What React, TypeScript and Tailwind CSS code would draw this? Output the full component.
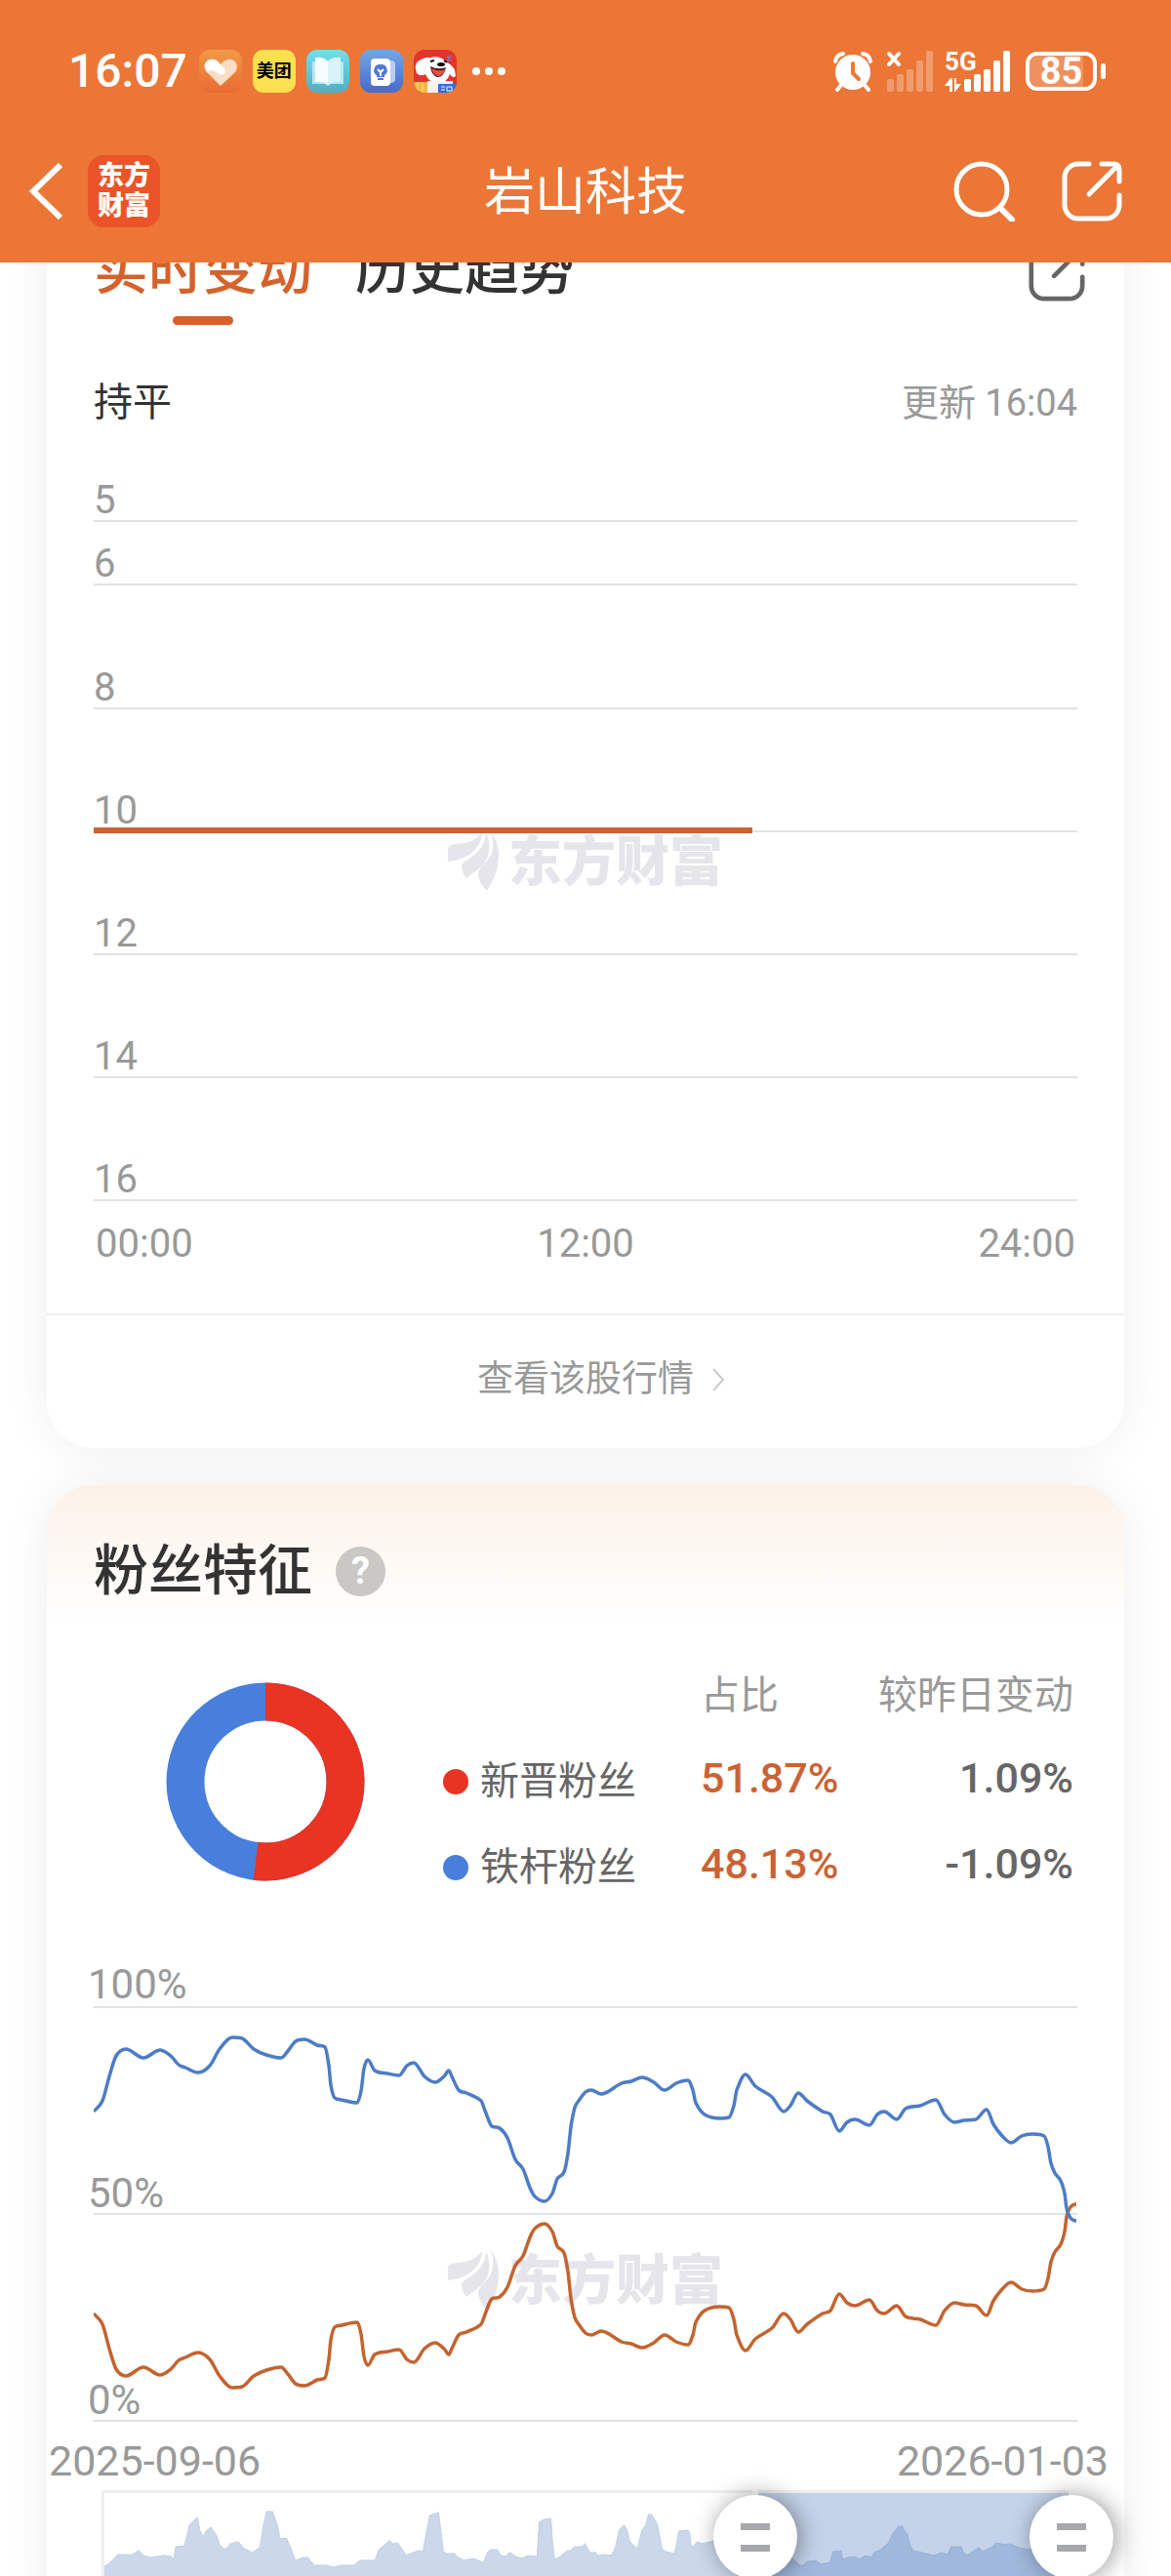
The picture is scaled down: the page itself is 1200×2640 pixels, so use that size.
import { useState } from "react";
import type { PropsWithChildren } from "react";

type Point = [number, number];

const levels = [
  { label: "5", height: "h-[42px]" },
  { label: "6", height: "h-[65px]" },
  { label: "8", height: "h-[127px]" },
  { label: "10", height: "h-[126px]" },
  { label: "12", height: "h-[126px]" },
  { label: "14", height: "h-[126px]" },
  { label: "16", height: "h-[126px]" },
];

const fans = [
  { name: "新晋粉丝", dot: "bg-[#e93323]", share: "51.87%", change: "1.09%" },
  { name: "铁杆粉丝", dot: "bg-[#487fdc]", share: "48.13%", change: "-1.09%" },
];

// loyal fans, new fans are the mirror of it
const loyal: Point[] = [
  [0, 107], [9, 96], [16, 71], [23, 50], [33, 43], [51, 52], [68, 44], [79, 50],
  [87, 59], [94, 62], [107, 67], [119, 60], [129, 43], [142, 31], [152, 32],
  [164, 43], [177, 49], [192, 52], [199, 45], [207, 35], [216, 33], [229, 39],
  [237, 41], [241, 60], [243, 80], [247, 93], [254, 95], [270, 98], [274, 86],
  [277, 63], [281, 54], [288, 65], [301, 68], [313, 70], [321, 60], [328, 57],
  [339, 71], [350, 77], [359, 71], [364, 65], [367, 71], [374, 85], [382, 88],
  [397, 96], [401, 106], [408, 122], [416, 124], [424, 134], [432, 156],
  [440, 166], [447, 185], [452, 194], [462, 199], [470, 191], [475, 176],
  [482, 169], [486, 150], [489, 123], [493, 103], [497, 96], [504, 87],
  [510, 85], [520, 89], [541, 78], [551, 76], [562, 72], [574, 77], [585, 85],
  [597, 78], [609, 75], [614, 85], [617, 98], [626, 110], [642, 114],
  [651, 113], [656, 101], [659, 85], [668, 69], [678, 81], [695, 92],
  [707, 107], [714, 101], [722, 88], [731, 96], [747, 107], [755, 110],
  [764, 127], [772, 118], [780, 115], [795, 121], [803, 110], [810, 107],
  [823, 115], [832, 104], [847, 101], [863, 95], [872, 110], [882, 118],
  [892, 116], [904, 115], [915, 105], [922, 120], [931, 132], [940, 139],
  [951, 132], [962, 130], [974, 132], [978, 143], [981, 160], [985, 170],
  [991, 178], [995, 191], [997, 206], [1001, 216], [1007, 219],
];
const fresh: Point[] = loyal.map(([x, y]) => [x, 421 - y]);

const overview =
  "3,78 7,76 17,66 32,66 38,62 43,67 50,69 64,67 71,68 74,71 76,58 85,57 90,36 98,28 101,42 104,48 107,42 112,38 118,47 121,56 125,60 128,60 132,55 140,53 146,60 155,64 162,59 166,35 169,22 175,22 180,36 183,50 189,49 192,55 198,71 200,72 206,69 211,69 218,77 230,77 237,79 245,77 259,77 265,72 280,72 284,61 295,52 298,55 303,54 312,67 319,64 325,62 329,63 336,26 345,23 347,38 350,63 353,65 361,65 365,69 371,72 380,70 386,72 391,75 395,64 399,61 405,61 409,67 414,68 418,64 424,68 430,70 437,67 446,68 448,33 453,30 460,29 462,56 464,71 470,68 477,62 481,62 484,58 492,58 495,55 500,64 506,64 508,67 515,66 522,67 526,59 530,41 535,36 538,41 541,53 547,59 549,59 553,42 557,36 560,25 563,25 569,35 572,50 574,61 578,63 586,65 588,59 591,42 600,41 602,43 604,59 610,53 615,55 626,52 668,60 708,71 715,77 719,77 723,73 731,72 737,76 746,74 749,63 757,62 759,71 764,69 771,68 776,71 782,67 788,69 791,64 798,61 805,55 810,45 816,37 820,37 822,42 825,45 828,57 831,62 840,64 852,67 860,64 866,66 870,58 880,58 883,65 886,67 892,63 898,59 902,63 912,58 916,54 925,56 930,55 940,59 951,61 996,60";

// monotone cubic through the points, so peaks do not overshoot
function smooth(pts: Point[]) {
  const n = pts.length;
  const d: number[] = [];
  for (let i = 0; i < n - 1; i++) {
    d.push((pts[i + 1][1] - pts[i][1]) / (pts[i + 1][0] - pts[i][0]));
  }
  const m = pts.map((_, i) => {
    if (i === 0) return d[0];
    if (i === n - 1) return 0;
    if (d[i - 1] * d[i] <= 0) return 0;
    const mean = (pts[i + 1][1] - pts[i - 1][1]) / (pts[i + 1][0] - pts[i - 1][0]);
    const limit = 3 * Math.min(Math.abs(d[i - 1]), Math.abs(d[i]));
    return Math.sign(mean) * Math.min(Math.abs(mean), limit);
  });
  let path = `M${pts[0][0]} ${pts[0][1]}`;
  for (let i = 0; i < n - 1; i++) {
    const [x0, y0] = pts[i];
    const [x1, y1] = pts[i + 1];
    const h = (x1 - x0) / 3;
    path += `C${x0 + h} ${y0 + m[i] * h} ${x1 - h} ${y1 - m[i + 1] * h} ${x1} ${y1}`;
  }
  return path;
}

const ShareIcon = ({ className }: { className: string }) => (
  <svg
    viewBox="0 0 62 62"
    className={className}
    fill="none"
    stroke="currentColor"
    strokeWidth="5"
    strokeLinecap="round"
    strokeLinejoin="round"
  >
    <path d="M28 3H17A14 14 0 0 0 3 17V45A14 14 0 0 0 17 59H45A14 14 0 0 0 59 45V35" />
    <path d="M41 3H53Q59 3 59 9V21M57 5L28 34" />
  </svg>
);

const Signal = () => (
  <g>
    <rect x="0" y="29" width="7" height="13" rx="2" />
    <rect x="10" y="24" width="7" height="18" rx="2" />
    <rect x="20" y="19" width="7" height="23" rx="2" />
    <rect x="30" y="10" width="7" height="32" rx="2" />
    <rect x="40" y="0" width="7" height="42" rx="2" />
  </g>
);

const AppIcons = () => (
  <div className="flex gap-[11px]">
    <svg viewBox="0 0 44 44" className="size-11">
      <defs>
        <linearGradient id="heart" x1="0" y1="0" x2="0" y2="1">
          <stop offset="0" stopColor="#f19a45" />
          <stop offset="1" stopColor="#ea6a33" />
        </linearGradient>
      </defs>
      <rect width="44" height="44" rx="11" fill="url(#heart)" />
      <path d="M22 37L8 23C2 16 8 8 15 10Q19 11 22 15Q25 11 29 10C37 8 42 16 37 23Z" fill="#fbdcc4" />
      <path d="M22 15Q18 9 12 10C6 11 4 17 8 22Q14 19 19 24Q23 28 27 23Q28 20 22 15Z" fill="#fff" />
    </svg>
    <div className="flex size-11 items-center justify-center rounded-[11px] bg-[#fde04f] text-lg font-bold text-black">
      美团
    </div>
    <svg viewBox="0 0 44 44" className="size-11">
      <defs>
        <linearGradient id="book" x1="0" y1="0" x2="0" y2="1">
          <stop offset="0" stopColor="#70dff0" />
          <stop offset="1" stopColor="#56acc4" />
        </linearGradient>
      </defs>
      <rect width="44" height="44" rx="11" fill="url(#book)" />
      <path d="M6 12H38V35H25L22 37L19 35H6Z" fill="#b5e9f2" />
      <path d="M9 8Q18 7 22 12V36Q18 32 9 33Z" fill="#f4feff" />
      <path d="M35 8Q26 7 22 12V36Q26 32 35 33Z" fill="#d8f4f8" />
    </svg>
    <svg viewBox="0 0 44 44" className="size-11">
      <defs>
        <linearGradient id="bulb" x1="0" y1="0" x2="0" y2="1">
          <stop offset="0" stopColor="#74a6e6" />
          <stop offset="1" stopColor="#466bc8" />
        </linearGradient>
      </defs>
      <rect width="44" height="44" rx="11" fill="url(#bulb)" />
      <path d="M31 11Q36 11 36 15V30Q36 34 31 34Z" fill="#b9cdf0" />
      <rect x="11" y="9" width="20" height="28" rx="4" fill="#fff" />
      <path d="M21 15A6 6 0 0 0 17 26V28H25V26A6 6 0 0 0 21 15Z" fill="#4d79d2" />
      <path d="M18 20L21 23L24 20M21 23V27" stroke="#fff" strokeWidth="2" fill="none" />
      <path d="M18 30H24" stroke="#4d79d2" strokeWidth="2" />
    </svg>
    <svg viewBox="0 0 44 44" className="size-11">
      <defs>
        <clipPath id="tile">
          <rect width="44" height="44" rx="11" />
        </clipPath>
      </defs>
      <g clipPath="url(#tile)">
        <rect width="44" height="44" fill="#e5322a" />
        <path d="M4 12Q12 7 17 8Q27 5 34 13Q43 17 43 27Q40 30 37 25Q34 34 24 35Q14 32 12 25Q7 28 3 24Q0 16 4 12Z" fill="#fff" />
        <path d="M17 17Q25 21 33 18Q31 28 24 28Q18 26 17 17Z" fill="#4a1713" />
        <path d="M18 19Q26 23 32 20Q30 27 25 27Q20 26 18 19Z" fill="#ec4b45" />
        <ellipse cx="28" cy="15" rx="4" ry="2" fill="#111" />
        <path d="M17 12L21 11M31 11L34 13" stroke="#111" strokeWidth="2" />
        <path d="M33 6L39 11M39 6L34 11M36 5V12" stroke="#6d83cf" strokeWidth="1" />
        <path d="M0 34Q4 28 9 32L14 30V44H0Z" fill="#e5322a" />
        <path d="M0 33H14V44H0Z" fill="#f5b73c" />
        <path d="M4 33V44M9 33V44" stroke="#fbe08a" strokeWidth="1" />
        <path d="M14 32H40V44H14Z" fill="#f6f2ee" />
        <path d="M25 35H44V44H25Z" fill="#2f6de0" />
        <path d="M28 38H32M28 41H32M34 38H39V42H34Z" stroke="#fff" strokeWidth="1" fill="none" />
      </g>
    </svg>
  </div>
);

const StatusBar = () => (
  <div className="flex h-[146px] items-center justify-between pr-[67px] pl-[70px]">
    <div className="flex items-center gap-3">
      <time className="text-5xl font-medium">16:07</time>
      <AppIcons />
      <svg viewBox="0 0 34 8" className="ml-1 h-2 w-[34px]" fill="currentColor">
        <circle cx="4" cy="4" r="4" />
        <circle cx="17" cy="4" r="4" />
        <circle cx="30" cy="4" r="4" />
      </svg>
    </div>
    <div className="flex items-center">
      <svg viewBox="0 0 42 42" className="size-[42px]" fill="none" stroke="currentColor" strokeLinecap="round">
        <circle cx="21" cy="22" r="18" fill="currentColor" stroke="none" />
        <path d="M3 11Q4 4 11 3M31 3Q38 4 39 11" strokeWidth="4" />
        <path d="M9 35L5 40M33 35L37 40" strokeWidth="4" />
        <path d="M21 13V23L27 29" stroke="#ec7636" strokeWidth="4" />
      </svg>
      <svg viewBox="0 0 47 42" className="ml-3.5 h-[42px] w-[47px]" fill="currentColor">
        <path d="M2 3L12 14M12 3L2 14" stroke="currentColor" strokeWidth="4" strokeLinecap="round" />
        <g opacity="0.28">
          <Signal />
        </g>
      </svg>
      <svg viewBox="0 0 67 42" className="ml-3 h-[42px] w-[67px] overflow-visible" fill="currentColor">
        <text x="0" y="20" fontSize="26" fontWeight="700">
          5G
        </text>
        <path d="M0 36L6 28H8V42H5V36ZM10 28H12V34H17L11 42H10Z" />
        <g transform="translate(20 0)">
          <Signal />
        </g>
      </svg>
      <div className="relative ml-4 flex h-10 w-[73px] items-center justify-center rounded-xl border-4 border-white">
        <div className="absolute inset-y-0 left-0 w-[55px] rounded-l-lg bg-white/20" />
        <span className="relative text-[38px] leading-8 font-bold">85</span>
      </div>
      <div className="ml-1 h-4 w-[5px] rounded-full bg-white" />
    </div>
  </div>
);

const NavBar = () => (
  <nav className="relative mb-[23px] flex h-[100px] items-center justify-between pr-[50px] pl-[30px]">
    <div className="flex items-center gap-[26px]">
      <button type="button" aria-label="返回">
        <svg viewBox="0 0 34 58" className="h-[58px] w-[34px]" fill="none" stroke="currentColor" strokeWidth="6">
          <path d="M32 2L4 29L32 56" />
        </svg>
      </button>
      <a
        href="#"
        className="flex size-[74px] items-center justify-center rounded-2xl bg-[#ea5428] text-center text-[27px] leading-[31px] font-black"
      >
        东方
        <br />
        财富
      </a>
    </div>
    <h1 className="absolute left-1/2 -translate-x-1/2 pt-1 text-[52px]">岩山科技</h1>
    <div className="flex items-center gap-12">
      <button type="button" aria-label="搜索">
        <svg viewBox="0 0 63 62" className="h-[62px] w-[63px]" fill="none" stroke="currentColor" strokeWidth="5">
          <circle cx="29" cy="29" r="26" />
          <path d="M48 48L60 60" strokeWidth="6" strokeLinecap="round" />
        </svg>
      </button>
      <button type="button" aria-label="分享">
        <ShareIcon className="size-[62px]" />
      </button>
    </div>
  </nav>
);

const Watermark = ({ className }: { className: string }) => (
  <div
    className={`absolute left-1/2 flex -translate-x-1/2 items-center gap-2.5 text-[#e6e5eb] ${className}`}
  >
    <svg viewBox="0 0 52 60" className="h-[60px] w-[52px]" fill="currentColor">
      <path d="M35 0C28 9 20 11 8 12Q0 13 0 17V30C14 29 34 21 35 0Z" />
      <path d="M39 0C38 18 26 24 17 30Q14 32 14 35Q15 43 19 47C30 38 40 34 42 20Q43 8 39 0Z" />
      <path d="M44 0Q52 10 52 22C52 38 48 47 40 60Q32 52 31 44C31 34 43 32 46 17Q47 7 44 0Z" />
    </svg>
    <span className="text-[55px] leading-[60px] font-black whitespace-nowrap">东方财富</span>
  </div>
);

const Card = ({ children, className = "" }: PropsWithChildren<{ className?: string }>) => (
  <section className={`mx-12 rounded-[48px] bg-white shadow-[0_0_48px_rgba(0,0,0,0.07)] ${className}`}>
    {children}
  </section>
);

const RankCard = () => {
  const elapsed = ((16 + 4 / 60) / 24) * 100;

  return (
    <Card className="-mt-16 pt-10">
      <div className="px-12">
        <div className="flex items-start justify-between">
          <div className="flex items-start gap-11 text-[56px] leading-[64px] font-medium">
            <button type="button" className="flex flex-col items-center gap-[15px] text-[#d4622a]">
              实时变动
              <span className="h-[9px] w-[62px] rounded-full bg-[#d4622a]" />
            </button>
            <button type="button">历史趋势</button>
          </div>
          <button type="button" aria-label="分享榜单" className="mt-1.5 -mr-2 text-[#666]">
            <ShareIcon className="size-[58px]" />
          </button>
        </div>
        <div className="mt-13 flex items-center justify-between leading-14">
          <span className="text-[40px]">持平</span>
          <span className="text-[38px] text-[#999]">更新 16:04</span>
        </div>
        <div className="relative mt-13">
          <Watermark className="top-[360px]" />
          {levels.map(({ label, height }) => (
            <div
              key={label}
              className={`flex items-end border-b-2 border-[#e2e2e2] text-[40px] leading-10 text-[#999] ${height}`}
            >
              {label}
            </div>
          ))}
          <div
            className="absolute top-[355px] left-0 h-1.5 bg-[#cb6234]"
            style={{ width: `${elapsed}%` }}
          />
        </div>
        <div className="mt-6 flex justify-between px-0.5 text-[40px] leading-10 text-[#999]">
          <span>00:00</span>
          <span>12:00</span>
          <span>24:00</span>
        </div>
      </div>
      <a
        href="#"
        className="mt-[51px] flex items-center justify-center gap-[18px] border-t-2 border-[#efefef] pt-[38px] pb-[42px] pl-8 text-[37px] leading-14 text-[#999]"
      >
        查看该股行情
        <svg viewBox="0 0 14 24" className="h-6 w-3.5" fill="none" stroke="#ccc" strokeWidth="2">
          <path d="M2 1L12 12L2 23" />
        </svg>
      </a>
    </Card>
  );
};

const Donut = () => {
  const r = 82;
  const len = 2 * Math.PI * r;

  return (
    <svg viewBox="0 0 204 204" className="size-[204px] shrink-0" fill="none" strokeWidth="39">
      <circle cx="102" cy="102" r={r} stroke="#487fdc" />
      <circle
        cx="102"
        cy="102"
        r={r}
        stroke="#e93323"
        strokeDasharray={`${len * 0.5187} ${len}`}
        transform="rotate(-90 102 102)"
      />
    </svg>
  );
};

const RangePicker = () => {
  const [start, setStart] = useState(67.3);
  const [end, setEnd] = useState(100);
  const input =
    "pointer-events-none absolute inset-0 h-full w-full opacity-0 [&::-webkit-slider-thumb]:pointer-events-auto";

  return (
    <div className="relative mt-2.5 mr-[51px] ml-14 h-24 border-3 border-[#eee]">
      <svg viewBox="3 3 990 90" preserveAspectRatio="none" className="h-full w-full">
        <polygon points={`3,96 ${overview} 996,96`} fill="#cad8ea" stroke="#bfd0e6" />
      </svg>
      <div
        className="absolute inset-y-0 bg-[rgba(58,108,185,0.3)]"
        style={{ left: `${start}%`, right: `${100 - end}%` }}
      />
      {[start, end].map((value, i) => (
        <div
          key={i}
          className="absolute -inset-y-[3px] flex w-[86px] -translate-x-1/2 items-center"
          style={{ left: `${value}%` }}
        >
          <div className="absolute inset-y-0 left-10 w-1.5 bg-white" />
          <div className="relative flex size-[86px] flex-col items-center justify-center gap-[15px] rounded-full bg-white shadow-[3px_0_24px_rgba(0,0,0,0.4)]">
            <span className="h-[7px] w-[30px] bg-[#a6a8ab]" />
            <span className="h-[7px] w-[30px] bg-[#a6a8ab]" />
          </div>
        </div>
      ))}
      <input
        type="range"
        aria-label="开始日期"
        className={input}
        step={0.1}
        value={start}
        onChange={(e) => setStart(Math.min(+e.target.value, end))}
      />
      <input
        type="range"
        aria-label="结束日期"
        className={input}
        step={0.1}
        value={end}
        onChange={(e) => setEnd(Math.max(+e.target.value, start))}
      />
    </div>
  );
};

const FansCard = () => (
  <Card className="mt-[38px] bg-linear-to-b from-[#fcf1e8] to-white to-[140px] pt-14 pb-12">
    <div className="px-12">
      <div className="flex items-center gap-6">
        <h2 className="text-[56px] leading-[64px] font-medium">粉丝特征</h2>
        <button
          type="button"
          className="flex size-[51px] items-center justify-center rounded-full bg-[#c9c8c4] text-[38px] leading-none font-bold text-white"
        >
          ?
        </button>
      </div>
      <div className="mt-13 mr-1 ml-[74px] flex items-center gap-20">
        <Donut />
        <table className="flex-1 text-[40px] leading-[88px] text-[#666]">
          <thead>
            <tr className="text-[#999]">
              <th />
              <th className="text-left font-normal">占比</th>
              <th className="text-right font-normal">较昨日变动</th>
            </tr>
          </thead>
          <tbody>
            {fans.map(({ name, dot, share, change }) => (
              <tr key={name} className="align-top">
                <td className="w-[264px]">
                  <div className="flex items-center gap-3">
                    <span className={`size-[26px] rounded-full ${dot}`} />
                    {name}
                  </div>
                </td>
                <td className="text-[43px] leading-20 font-medium text-[#cb6234]">{share}</td>
                <td className="text-right text-[43px] leading-20 font-medium">{change}</td>
              </tr>
            ))}
          </tbody>
        </table>
      </div>
      <div className="relative mt-14 text-[42px] leading-10 text-[#999]">
        <Watermark className="top-[293px]" />
        <div className="flex h-11 items-start border-b-2 border-[#e2e2e2]">
          <span className="-ml-1.5">100%</span>
        </div>
        <div className="flex h-[212px] items-end border-b-2 border-[#e2e2e2]">
          <span className="-ml-1.5">50%</span>
        </div>
        <div className="flex h-[212px] items-end border-b-2 border-[#e2e2e2]">
          <span className="-ml-1.5">0%</span>
        </div>
        <svg
          viewBox="0 0 1008 424"
          preserveAspectRatio="none"
          className="absolute bottom-px left-0 h-[424px] w-full"
          fill="none"
          strokeWidth="3.5"
        >
          <path d={smooth(fresh)} stroke="#c4632f" />
          <path d={smooth(loyal)} stroke="#4c7cc6" />
        </svg>
      </div>
    </div>
    <div className="mt-5 flex justify-between px-0.5 text-[43px] leading-10 text-[#999]">
      <span>2025-09-06</span>
      <span className="pr-3.5">2026-01-03</span>
    </div>
    <RangePicker />
  </Card>
);

export default function App() {
  return (
    <div className="flex h-screen flex-col bg-white font-[Roboto,'Noto_Sans_CJK_SC',sans-serif] text-[#333]">
      <header className="shrink-0 bg-[#ec7636] text-white">
        <StatusBar />
        <NavBar />
      </header>
      <main className="flex-1 overflow-y-auto [scrollbar-width:none]">
        <div className="flow-root">
          <RankCard />
          <FansCard />
        </div>
      </main>
    </div>
  );
}
